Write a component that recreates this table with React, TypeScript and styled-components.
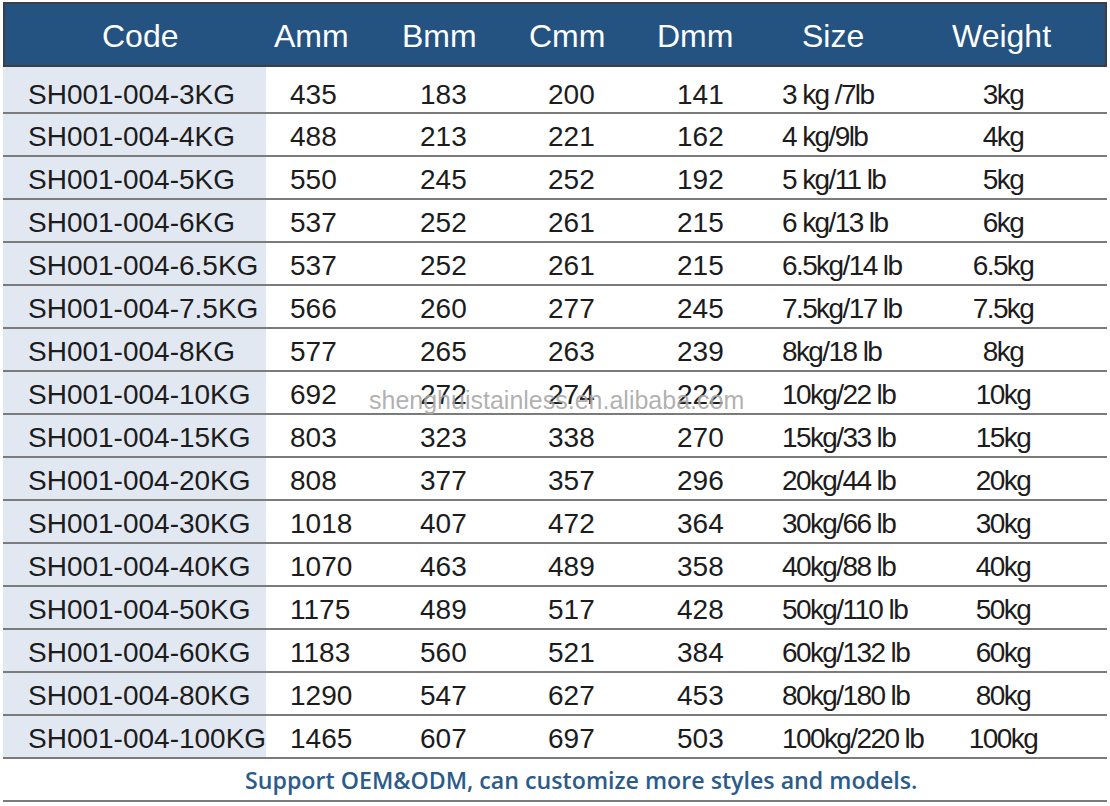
import React from "react";
import styled, { createGlobalStyle } from "styled-components";

const Global = createGlobalStyle`
  html, body { margin: 0; padding: 0; background: #ffffff; }
  body { font-family: "Liberation Sans", Arial, sans-serif; }
`;

const COLS = "263px 129px 128px 129px 106px 185px 1fr";

const Page = styled.div`
  width: 1110px;
  height: 806px;
  padding: 2px 3px 0 3px;
  box-sizing: border-box;
  position: relative;
  background: #fff;
`;

const Header = styled.div`
  display: grid;
  grid-template-columns: ${COLS};
  height: 65px;
  box-sizing: border-box;
  background: #245382;
  border: 2px solid #3b4048;
  color: #ffffff;
  font-size: 32px;
  align-items: center;
`;

const HeadCell = styled.div<{ $pad: number }>`
  padding-left: ${(p) => p.$pad}px;
  white-space: nowrap;
  line-height: 1;
  padding-top: 2px;
`;

const Row = styled.div<{ $first?: boolean }>`
  display: grid;
  grid-template-columns: ${COLS};
  height: ${(p) => (p.$first ? 47 : 43)}px;
  box-sizing: border-box;
  border-bottom: 2px solid #7b7b7b;
`;

const Cell = styled.div<{ $pad?: number; $tight?: boolean; $center?: boolean; $first?: boolean }>`
  display: flex;
  align-items: center;
  justify-content: ${(p) => (p.$center ? "center" : "flex-start")};
  padding-left: ${(p) => p.$pad ?? 0}px;
  padding-right: ${(p) => (p.$center ? 44 : 0)}px;
  padding-top: ${(p) => (p.$first ? 10 : 5)}px;
  font-size: 28px;
  color: #1c1c1c;
  white-space: nowrap;
  letter-spacing: ${(p) => (p.$tight ? "-1.6px" : "0")};
`;

const CodeCell = styled(Cell)`
  background: #e2e8f1;
`;

const Footer = styled.div`
  height: 43px;
  box-sizing: border-box;
  border-bottom: 2px solid #7b7b7b;
  display: flex;
  align-items: center;
  padding-left: 242px;
  font-family: "Open Sans", "Noto Sans", sans-serif;
  font-weight: 600;
  font-size: 23.2px;
  color: #2b5b8a;
  white-space: nowrap;
`;

const Watermark = styled.div`
  position: absolute;
  left: 369px;
  top: 386px;
  font-size: 25px;
  color: rgba(110, 110, 110, 0.55);
  white-space: nowrap;
  pointer-events: none;
  text-shadow: 0 0 1px rgba(255, 255, 255, 0.8);
`;

const headers: [string, number][] = [
  ["Code", 97],
  ["Amm", 6],
  ["Bmm", 5],
  ["Cmm", 4],
  ["Dmm", 3],
  ["Size", 42],
  ["Weight", 7],
];

const data: string[][] = [
  ["SH001-004-3KG", "435", "183", "200", "141", "3 kg /7lb", "3kg"],
  ["SH001-004-4KG", "488", "213", "221", "162", "4 kg/9lb", "4kg"],
  ["SH001-004-5KG", "550", "245", "252", "192", "5 kg/11 lb", "5kg"],
  ["SH001-004-6KG", "537", "252", "261", "215", "6 kg/13 lb", "6kg"],
  ["SH001-004-6.5KG", "537", "252", "261", "215", "6.5kg/14 lb", "6.5kg"],
  ["SH001-004-7.5KG", "566", "260", "277", "245", "7.5kg/17 lb", "7.5kg"],
  ["SH001-004-8KG", "577", "265", "263", "239", "8kg/18 lb", "8kg"],
  ["SH001-004-10KG", "692", "272", "274", "222", "10kg/22 lb", "10kg"],
  ["SH001-004-15KG", "803", "323", "338", "270", "15kg/33 lb", "15kg"],
  ["SH001-004-20KG", "808", "377", "357", "296", "20kg/44 lb", "20kg"],
  ["SH001-004-30KG", "1018", "407", "472", "364", "30kg/66 lb", "30kg"],
  ["SH001-004-40KG", "1070", "463", "489", "358", "40kg/88 lb", "40kg"],
  ["SH001-004-50KG", "1175", "489", "517", "428", "50kg/110 lb", "50kg"],
  ["SH001-004-60KG", "1183", "560", "521", "384", "60kg/132 lb", "60kg"],
  ["SH001-004-80KG", "1290", "547", "627", "453", "80kg/180 lb", "80kg"],
  ["SH001-004-100KG", "1465", "607", "697", "503", "100kg/220 lb", "100kg"],
];

export default function App() {
  return (
    <Page>
      <Global />
      <Header>
        {headers.map(([h, pad]) => (
          <HeadCell key={h} $pad={pad}>
            {h}
          </HeadCell>
        ))}
      </Header>
      {data.map((r, i) => {
        const first = i === 0;
        return (
          <Row key={r[0]} $first={first}>
            <CodeCell $pad={25} $first={first}>{r[0]}</CodeCell>
            <Cell $pad={24} $first={first}>{r[1]}</Cell>
            <Cell $pad={25} $first={first}>{r[2]}</Cell>
            <Cell $pad={25} $first={first}>{r[3]}</Cell>
            <Cell $pad={25} $first={first}>{r[4]}</Cell>
            <Cell $pad={24} $tight $first={first}>{r[5]}</Cell>
            <Cell $tight $center $first={first}>{r[6]}</Cell>
          </Row>
        );
      })}
      <Footer>Support OEM&amp;ODM, can customize more styles and models.</Footer>
      <Watermark>shenghuistainless.en.alibaba.com</Watermark>
    </Page>
  );
}
